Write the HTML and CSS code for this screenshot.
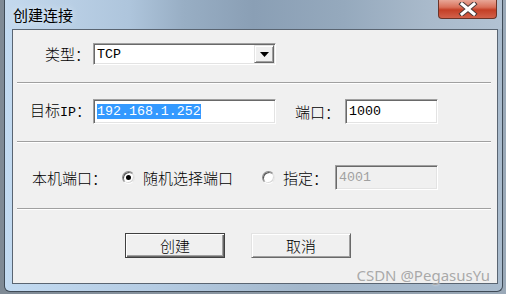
FILE: index.html
```html
<!DOCTYPE html>
<html lang="zh-CN">

<head>
    <meta charset="UTF-8">
    <meta name="viewport" content="width=device-width, initial-scale=1.0">
    <title>创建连接</title>
    <link rel="stylesheet" href="styles.css">
</head>

<body>
    <div class="window">
        <div class="titlebar">
            <span class="title">创建连接</span>
            <div class="close">
                <svg width="22" height="14" viewBox="0 0 22 14">
                    <path d="M5 2 L17 12 M17 2 L5 12" stroke="#4a3a38" stroke-width="5" stroke-linecap="square" fill="none" />
                    <path d="M5 2 L17 12 M17 2 L5 12" stroke="#ffffff" stroke-width="3" stroke-linecap="square" fill="none" />
                </svg>
            </div>
        </div>

        <div class="client">
            <div class="row row-type">
                <label class="lbl lbl-type">类型：</label>
                <div class="combo">
                    <span class="combo-text">TCP</span>
                    <span class="combo-btn">
                        <svg width="9" height="5" viewBox="0 0 9 5"><path d="M0 0 H9 L4.5 5 Z" fill="#000" /></svg>
                    </span>
                </div>
            </div>
            <div class="sep"></div>

            <div class="row row-target">
                <label class="lbl lbl-ip">目标<span class="lat">IP</span>：</label>
                <div class="field field-ip"><span class="sel">192.168.1.252</span></div>
                <label class="lbl lbl-port">端口：</label>
                <div class="field field-port">1000</div>
            </div>
            <div class="sep"></div>

            <div class="row row-local">
                <label class="lbl lbl-local">本机端口：</label>
                <span class="radio checked"></span>
                <span class="opt opt-random">随机选择端口</span>
                <span class="radio"></span>
                <span class="opt opt-fixed">指定：</span>
                <div class="field field-fixed disabled">4001</div>
            </div>
            <div class="sep sep-last"></div>

            <div class="row row-buttons">
                <button class="btn btn-default">创建</button>
                <button class="btn">取消</button>
            </div>
        </div>

        <div class="watermark">CSDN @PegasusYu</div>
    </div>
</body>

</html>
```

FILE: styles.css
```css
body {
    margin: 0;
    width: 506px;
    height: 294px;
    overflow: hidden;
    background: linear-gradient(to right, #7f8a95, #8e9aa6 60%, #9aa9b8);
    font-family: "Noto Sans CJK SC", sans-serif;
}

.window {
    position: relative;
    box-sizing: border-box;
    margin-left: 4px;
    width: 499px;
    height: 292px;
    padding: 0 4px 0 7px;
    border: 1px solid #3f4b57;
    border-top: none;
    border-radius: 0 0 6px 6px;
    background: linear-gradient(to right, #c2daf1, #b5cce3 30%, #a3b7cb 60%, #a9bbcd);
}

.titlebar {
    display: flex;
    align-items: flex-start;
    height: 29px;
    margin: 0 -4px 0 -7px;
    background: linear-gradient(to right, #c4d9ee 0%, #aec5dc 25%, #98aec4 36%, #8a9fb5 50%, #95a9bd 68%, #a9bacb 85%, #b2c2d3 100%);
}

.title {
    padding: 5px 0 0 8px;
    font-size: 15px;
    line-height: 20px;
    color: #000;
    text-shadow: 0 0 6px #e6f0fa;
}

.close {
    display: flex;
    justify-content: center;
    align-items: center;
    box-sizing: border-box;
    width: 59px;
    height: 19px;
    margin: 0 5px 0 auto;
    border: 1px solid #6b3428;
    border-top: none;
    border-radius: 0 0 4px 4px;
    background: linear-gradient(to bottom, #e8a697 0%, #d9705a 40%, #c43f26 55%, #d2614a 100%);
}

.client {
    box-sizing: border-box;
    height: 255px;
    padding-top: 13px;
    border: 1px solid #5a6572;
    background: #f0f0f0;
}

.row {
    display: flex;
    align-items: center;
}

.lbl, .opt {
    font-size: 15px;
    font-weight: 300;
    line-height: 20px;
    color: #000;
}

.lat {
    font-family: "Liberation Mono", monospace;
    font-size: 13.3px;
    font-weight: 400;
}

/* row 1 */
.row-type {
    height: 22px;
    padding-left: 32px;
}

.lbl-type {
    width: 48px;
}

.combo {
    display: flex;
    align-items: center;
    justify-content: space-between;
    box-sizing: border-box;
    width: 183px;
    height: 22px;
    padding: 0 1px 0 2px;
    border: 1px solid;
    border-color: #a0a0a0 #ffffff #ffffff #a0a0a0;
    box-shadow: inset 1px 1px #696969, inset -1px -1px #e3e3e3;
    background: #fff;
}

.combo-text {
    padding-left: 1px;
    font-family: "Liberation Mono", monospace;
    font-size: 13.3px;
}

.combo-btn {
    display: flex;
    align-items: center;
    justify-content: center;
    box-sizing: border-box;
    width: 20px;
    height: 18px;
    border: 1px solid;
    border-color: #e3e3e3 #696969 #696969 #e3e3e3;
    box-shadow: inset 1px 1px #fff, inset -1px -1px #a0a0a0;
    background: #f0f0f0;
}

.sep {
    margin: 17px 6px 0 4px;
    border-top: 1px solid #a0a0a0;
    border-bottom: 1px solid #fff;
}

/* row 2 */
.row-target {
    height: 25px;
    margin-top: 15px;
    padding-left: 17px;
}

.lbl-ip {
    width: 63px;
}

.field {
    display: flex;
    align-items: center;
    box-sizing: border-box;
    height: 25px;
    padding-left: 3px;
    border: 1px solid;
    border-color: #a0a0a0 #ffffff #ffffff #a0a0a0;
    box-shadow: inset 1px 1px #696969, inset -1px -1px #e3e3e3;
    background: #fff;
    font-family: "Liberation Mono", monospace;
    font-size: 13.3px;
    color: #000;
}

.field-ip {
    width: 183px;
}

.sel {
    line-height: 15px;
    background: #3399ff;
    color: #fff;
}

.lbl-port {
    width: 50px;
    margin-left: 19px;
}

.field-port {
    width: 93px;
}

/* row 3 */
.row-local {
    height: 25px;
    margin-top: 22px;
    padding-left: 19px;
}

.lbl-local {
    width: 90px;
}

.radio {
    position: relative;
    box-sizing: border-box;
    width: 13px;
    height: 13px;
    border-radius: 50%;
    border: 1px solid;
    border-color: #8a8a8a #e6e6e6 #ffffff #8a8a8a;
    box-shadow: inset 1px 1px #555, inset -1px -1px #d8d8d8;
    background: #fff;
}

.radio.checked::after {
    content: "";
    position: absolute;
    left: 3px;
    top: 3px;
    width: 5px;
    height: 5px;
    border-radius: 50%;
    background: #000;
}

.opt {
    margin-left: 8px;
}

.opt-random {
    width: 119px;
}

.opt-fixed {
    width: 52px;
}

.field-fixed {
    width: 103px;
}

.disabled {
    background: #f0f0f0;
    color: #a0a0a0;
}

.sep-last {
    margin-top: 18px;
}

/* buttons */
.row-buttons {
    gap: 26px;
    margin-top: 23px;
    padding-left: 112px;
}

.btn {
    box-sizing: border-box;
    width: 100px;
    height: 25px;
    padding: 0;
    border: 1px solid;
    border-color: #e3e3e3 #696969 #696969 #e3e3e3;
    box-shadow: inset 1px 1px #fff, inset -1px -1px #a0a0a0;
    background: #f0f0f0;
    font-family: "Noto Sans CJK SC", sans-serif;
    font-size: 15px;
    font-weight: 300;
    line-height: 20px;
    color: #000;
}

.btn-default {
    border-color: #404040;
    box-shadow: inset 1px 1px #fff, inset -1px -1px #696969, inset -2px -2px #a0a0a0;
}

.watermark {
    position: absolute;
    right: 12px;
    bottom: 6px;
    font-family: "Noto Sans", sans-serif;
    font-size: 15px;
    line-height: 20px;
    color: #a9a9a9;
    text-shadow: 0 0 2px #f4f4f4;
}
```
